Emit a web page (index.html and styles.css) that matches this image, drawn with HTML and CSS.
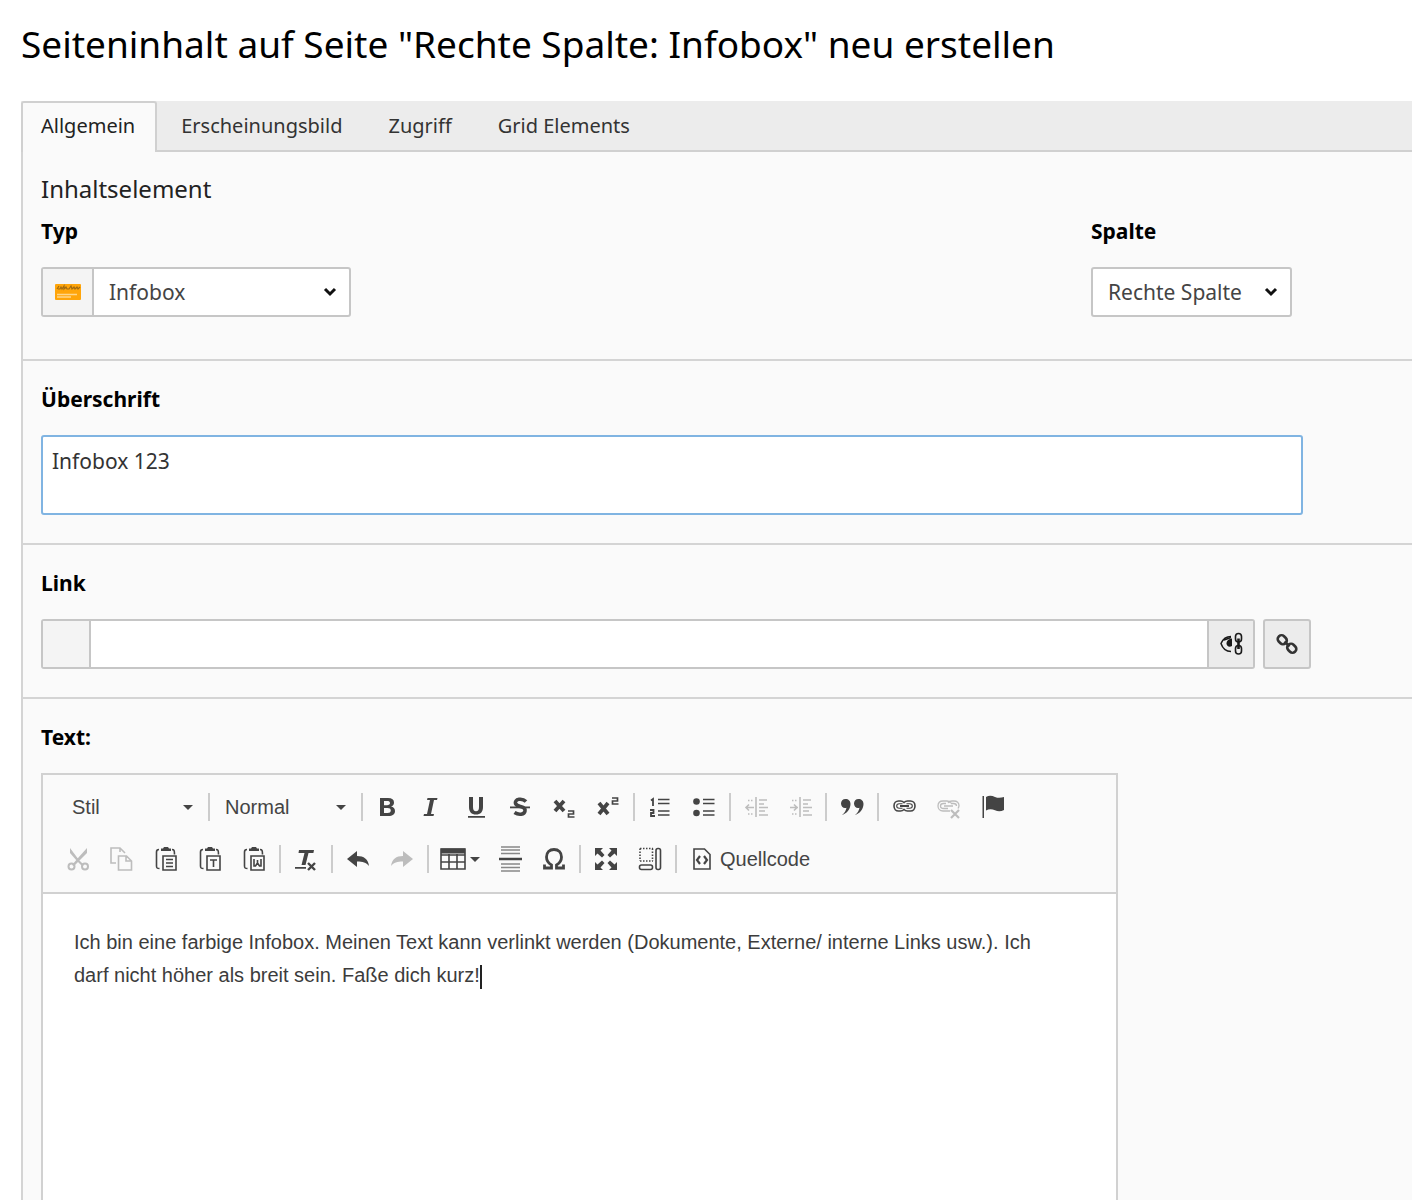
FILE: index.html
```html
<!DOCTYPE html>
<html lang="de">
<head>
<meta charset="utf-8">
<meta name="viewport" content="width=device-width, initial-scale=1">
<title>Seiteninhalt neu erstellen</title>
<link rel="stylesheet" href="styles.css">
</head>
<body>
<main class="page">
  <h1 class="page-title">Seiteninhalt auf Seite "Rechte Spalte: Infobox" neu erstellen</h1>

  <div class="tabs" role="tablist">
    <button class="tab tab-active" type="button" role="tab" aria-selected="true">Allgemein</button>
    <button class="tab" type="button" role="tab">Erscheinungsbild</button>
    <button class="tab" type="button" role="tab">Zugriff</button>
    <button class="tab" type="button" role="tab">Grid Elements</button>
  </div>

  <form class="panel">
    <section class="section section-first">
      <h2 class="palette-title">Inhaltselement</h2>
      <div class="columns">
        <div class="field">
          <label class="label" for="type">Typ</label>
          <div class="group group-type">
            <span class="addon">
              <svg width="26" height="16" viewBox="0 0 26 16"><rect width="26" height="16" rx="1" fill="#ffa50a"/><path d="M2 5l2-3M3 5h2l1-2 1 2 2-3v3l2-2 1 2h2l2-3 1 3 2-2 1 2 2-2 1 2 2-2" fill="none" stroke="#a06a10" stroke-width="1.200"/><path d="M2 10.500h20M2 13h14" stroke="#ffd68a" stroke-width="1.600"/></svg>
            </span>
            <span class="select-wrap">
              <select class="select" id="type"><option>Infobox</option></select>
              <svg class="chevron" width="14" height="10" viewBox="0 0 14 10"><path d="M2 2l5 5 5-5" fill="none" stroke="#111" stroke-width="3"/></svg>
            </span>
          </div>
        </div>
        <div class="field">
          <label class="label" for="column">Spalte</label>
          <div class="group group-column">
            <span class="select-wrap">
              <select class="select" id="column"><option>Rechte Spalte</option></select>
              <svg class="chevron" width="14" height="10" viewBox="0 0 14 10"><path d="M2 2l5 5 5-5" fill="none" stroke="#111" stroke-width="3"/></svg>
            </span>
          </div>
        </div>
      </div>
    </section>

    <section class="section">
      <label class="label" for="header">Überschrift</label>
      <textarea class="header-input" id="header">Infobox 123</textarea>
    </section>

    <section class="section">
      <label class="label" for="link">Link</label>
      <div class="link-row">
        <div class="group group-link">
          <span class="addon addon-link"></span>
          <input class="link-input" id="link" type="text">
          <button class="square-btn" type="button" aria-label="Linkziel anzeigen">
            <svg width="24" height="24" viewBox="0 0 24 24" fill="none" stroke="#1a1a1a"><path d="M12 4.500C7 4.500 3.500 8 2 11.500 3.500 16 7 19.500 12 19.500" stroke-width="1.500"/><path d="M13 6.500C10 7 7.500 8.500 7.500 11.500s3 4 5.500 2.500z" fill="#1a1a1a" stroke="none"/><path d="M5 8l7-2.500" stroke-width="1.500"/><rect x="16.500" y="1.500" width="6" height="8.500" rx="3" stroke-width="1.600"/><rect x="16.500" y="13.500" width="6" height="8.500" rx="3" stroke-width="1.600"/><path d="M19.500 6.500v10.500" stroke-width="2.600"/></svg>
          </button>
        </div>
        <button class="square-btn" type="button" aria-label="Link bearbeiten">
          <svg width="24" height="24" viewBox="0 0 24 24" fill="none" stroke="#333" stroke-width="2.600"><rect x="2.500" y="4" width="9.500" height="7.500" rx="3.500" transform="rotate(45 7.250 7.750)"/><rect x="12" y="12.500" width="9.500" height="7.500" rx="3.500" transform="rotate(45 16.750 16.250)"/><path d="M9.500 9.500l5 5"/></svg>
        </button>
      </div>
    </section>

    <section class="section section-editor">
      <span class="label" id="text-label">Text:</span>
      <div class="editor">
        <div class="toolbar">
          <div class="tool-row tool-row-formats">
            <button class="combo" type="button">Stil<span class="arrow"></span></button>
            <span class="sep"></span>
            <button class="combo" type="button">Normal<span class="arrow"></span></button>
            <span class="sep"></span>
            <button class="tool" type="button" aria-label="Fett"><svg width="24" height="24" viewBox="0 0 24 24"><path fill-rule="evenodd" d="M4 3h8c4 0 6 1.500 6 4.500 0 2-1 3.500-3 4 2.500.5 4 2 4 4.500 0 3.500-2.500 5-6.500 5H4zM8 6v4.200h3c2 0 3-.6 3-2.100S13 6 11 6zM8 13v5h3.500c2.200 0 3.300-.8 3.300-2.500S13.700 13 11.500 13z"/></svg></button>
            <button class="tool" type="button" aria-label="Kursiv"><svg width="24" height="24" viewBox="0 0 24 24"><path d="M7.500 3h10l-.5 2h-3L11 19h3l-.5 2h-10l.5-2h3L10 5H7z"/></svg></button>
            <button class="tool" type="button" aria-label="Unterstrichen"><svg width="24" height="24" viewBox="0 0 24 24"><path d="M5 2h4v10c0 3 1 4.200 3 4.200s3-1.200 3-4.200V2h4v10c0 5-2.500 7.500-7 7.500S5 17 5 12zM4 21h17v1.800H4z"/></svg></button>
            <button class="tool" type="button" aria-label="Durchgestrichen"><svg width="24" height="24" viewBox="0 0 24 24"><path d="M18 6.500c-2-2-4.500-2.500-7-2.200C8 4.700 7 7 7.500 8.500c.8 2 3 2.500 5 3 3.500.8 5 2 4.500 4.500-.5 3.500-6 4.500-10.500 1.500" fill="none" stroke="#444" stroke-width="3.600"/><path d="M2 11.500h20v1.800H2z"/></svg></button>
            <button class="tool" type="button" aria-label="Tiefgestellt"><svg class="line" width="24" height="24" viewBox="0 0 24 24"><path d="M3 6l9 10M12 6L3 16" stroke-width="3.800"/><path d="M16 16h5.500v3h-5v3h6" stroke-width="1.700"/></svg></button>
            <button class="tool" type="button" aria-label="Hochgestellt"><svg class="line" width="24" height="24" viewBox="0 0 24 24"><path d="M3 8l9 11M12 8L3 19" stroke-width="3.800"/><path d="M16 3h5.500v3h-5v3h6" stroke-width="1.700"/></svg></button>
            <span class="sep"></span>
            <button class="tool" type="button" aria-label="Nummerierte Liste"><svg class="line" width="24" height="24" viewBox="0 0 24 24"><path d="M3 5.500l2-1.500v7M2 15h3.500v3H3v3h4" stroke-width="1.800"/><path d="M10 4.500h11.500M10 8.500h11.500M10 16h11.500M10 20h11.500" stroke-width="1.700"/></svg></button>
            <button class="tool" type="button" aria-label="Liste"><svg class="line" width="24" height="24" viewBox="0 0 24 24"><circle cx="4.500" cy="6.500" r="3.300" fill="#444" stroke="none"/><circle cx="4.500" cy="18" r="3.300" fill="#444" stroke="none"/><path d="M11 4.500h11.500M11 8.500h11.500M11 16h11.500M11 20h11.500" stroke-width="1.700"/></svg></button>
            <span class="sep"></span>
            <button class="tool faded" type="button" aria-label="Einzug verkleinern" disabled><svg class="line" width="24" height="24" viewBox="0 0 24 24"><path d="M12 2v20M15 5h8M15 9h5M15 12.500h9M15 16h6M15 20h9M2 12.500h8M5 9.500l-3 3 3 3"/><path d="M4 5.500h6M4 19h6" stroke-dasharray="1.500 1.500"/></svg></button>
            <button class="tool faded" type="button" aria-label="Einzug vergrößern" disabled><svg class="line" width="24" height="24" viewBox="0 0 24 24"><path d="M12 2v20M15 5h8M15 9h5M15 12.500h9M15 16h6M15 20h9M2 12.500h8M6 9.500l3 3-3 3"/><path d="M4 5.500h6M4 19h6" stroke-dasharray="1.500 1.500"/></svg></button>
            <span class="sep"></span>
            <button class="tool" type="button" aria-label="Zitat"><svg width="24" height="24" viewBox="0 0 24 24"><path d="M5.500 4C2.800 4 1 6 1 8.500S2.800 13 5 13c.5 0 1-.1 1.500-.3C6 15.500 4.500 18 2 20c5-1.500 8.500-6 8.500-11C10.500 6 8.500 4 5.500 4zM18.500 4C15.800 4 14 6 14 8.500s1.800 4.500 4 4.500c.5 0 1-.1 1.500-.3-.5 2.800-2 5.300-4.500 7.300 5-1.500 8.500-6 8.500-11 0-3-2-5-5-5z"/></svg></button>
            <span class="sep"></span>
            <button class="tool" type="button" aria-label="Link einfügen"><svg class="line" width="24" height="24" viewBox="0 0 24 24"><path d="M12 7.500c-1-1-2-1.500-3.500-1.500H6.500C4 6 2 8 2 11s2 5 4.500 5h2c1.500 0 2.500-.5 3.500-1.500 1 1 2 1.500 3.500 1.500h3c2.500 0 4.500-2 4.500-5s-2-5-4.500-5h-3C14 6 13 6.500 12 7.500z"/><path d="M10.500 8.800H7.200c-1.500 0-2.500.9-2.500 2.200s1 2.200 2.500 2.200h3.300M14.500 8.800h3.300c1.500 0 2.500.9 2.500 2.200s-1 2.200-2.500 2.200h-3.300" stroke-width="1.100"/><path d="M8 11h9" stroke-width="2"/></svg></button>
            <button class="tool faded" type="button" aria-label="Link entfernen" disabled><svg class="line" width="24" height="24" viewBox="0 0 24 24"><path d="M14 16H7c-3 0-5-2-5-5s2-5 5-5h4c2 0 3 1 4 2M12 8c1-1.500 2-2 4-2h2c3 0 5 2 5 4.500 0 1-.3 2-1 3M12 13.500H7.500c-2 0-3-1-3-2.500s1-2.500 3-2.500H10M15 8.500h2.500c2 0 3 1 3 2.500M8 11h9" stroke-width="1.300"/><path d="M15 15l8 8M23 15l-8 8" stroke-width="2.200"/></svg></button>
            <button class="tool" type="button" aria-label="Anker"><svg width="24" height="24" viewBox="0 0 24 24"><path d="M2.500 1H4v22H2.500zM6 2c3-2 6-1.500 9 0 3 1.200 6 1 9 0v13c-3 1.500-6 1.500-9 .3-3-1.300-6-1.500-9 .2z"/></svg></button>
          </div>
          <div class="tool-row">
            <button class="tool faded" type="button" aria-label="Ausschneiden" disabled><svg width="24" height="24" viewBox="0 0 24 24"><path d="M4 1l9 12 5 5-2 1-5-5L4 6zM21 1v5l-8 8-5 5-2-1 6-7z"/><g fill="none" stroke="#bdbdbd" stroke-width="2"><circle cx="5.500" cy="19.500" r="3"/><circle cx="19" cy="19.500" r="3"/></g></svg></button>
            <button class="tool faded" type="button" aria-label="Kopieren" disabled><svg class="line" width="24" height="24" viewBox="0 0 24 24"><path d="M6 16H1V1h9l5 5M10 1v4M8.500 9h8l5 5v9h-13zM16 9v5h5"/></svg></button>
            <button class="tool" type="button" aria-label="Einfügen"><svg class="line" width="24" height="24" viewBox="0 0 24 24"><path d="M5 2.500C3 2.500 2.500 3 2.500 5v14c0 2 .5 2.500 3 2.500M18 2.500c2 0 2.500.5 2.500 5M9 9h13v14H9zM12 12.500h7M12 16h7M12 19.500h7"/><path d="M7 4V1.500h2L10 0h4l1 1.500h2V4z" fill="#444" stroke="none"/></svg></button>
            <button class="tool" type="button" aria-label="Als Text einfügen"><svg class="line" width="24" height="24" viewBox="0 0 24 24"><path d="M5 2.500C3 2.500 2.500 3 2.500 5v14c0 2 .5 2.500 3 2.500M18 2.500c2 0 2.500.5 2.500 5M9 9h13v14H9zM12 13h7M15.500 13v7"/><path d="M7 4V1.500h2L10 0h4l1 1.500h2V4z" fill="#444" stroke="none"/></svg></button>
            <button class="tool" type="button" aria-label="Aus Word einfügen"><svg class="line" width="24" height="24" viewBox="0 0 24 24"><path d="M5 2.500C3 2.500 2.500 3 2.500 5v14c0 2 .5 2.500 3 2.500M18 2.500c2 0 2.500.5 2.500 5M9 9h13v14H9zM12 12v7h1.500l2-3 2 3H19v-7M15.500 13v3"/><path d="M7 4V1.500h2L10 0h4l1 1.500h2V4z" fill="#444" stroke="none"/></svg></button>
            <span class="sep"></span>
            <button class="tool" type="button" aria-label="Formatierung entfernen"><svg width="24" height="24" viewBox="0 0 24 24"><path d="M5 3h15l-.6 3H14.500L11.500 18h-4L10.500 6H4.500zM1 20h11v1.700H1z"/><path d="M14 16l7 7M21 16l-7 7" stroke="#444" stroke-width="2.400"/></svg></button>
            <span class="sep"></span>
            <button class="tool" type="button" aria-label="Rückgängig"><svg width="24" height="24" viewBox="0 0 24 24"><path d="M1 12l10-8v5c7 0 11 3 12 10-3-3.500-6-4.500-12-4.500V20z"/></svg></button>
            <button class="tool faded" type="button" aria-label="Wiederholen" disabled><svg width="24" height="24" viewBox="0 0 24 24"><path d="M23 12L13 4v5C6 9 2 12 1 19c3-3.500 6-4.500 12-4.500V20z"/></svg></button>
            <span class="sep"></span>
            <button class="tool tool-menu" type="button" aria-label="Tabelle"><svg class="line" width="26" height="24" viewBox="0 0 26 24"><path d="M1 2h24v20H1zM1 8h24M1 15h24M9 7v15M17 7v15"/><path d="M1 1.500h24v5H1z" fill="#444" stroke="none"/></svg><span class="arrow"></span></button>
            <button class="tool" type="button" aria-label="Horizontale Linie"><svg width="24" height="26" viewBox="0 0 24 26" stroke="#888" stroke-width="1.300"><path d="M3 1h19M3 4h19M3 7.500h19M3 18h19M3 21.500h19M3 25h19"/><path d="M1 13h23" stroke="#444" stroke-width="2.500"/></svg></button>
            <button class="tool" type="button" aria-label="Sonderzeichen"><svg class="line" width="24" height="24" viewBox="0 0 24 24"><path d="M2.500 17.500V21h7v-3C6 16 4.500 13.500 4.500 10c0-4.500 3-7.500 7.500-7.500s7.500 3 7.500 7.500c0 3.500-1.500 6-5 8v3h7v-3.500" stroke-width="2.800"/></svg></button>
            <span class="sep"></span>
            <button class="tool" type="button" aria-label="Maximieren"><svg width="24" height="24" viewBox="0 0 24 24"><path d="M1 1h8L6.500 3.500l4 4.500L8 10.500l-4.500-4L1 9zM23 1v8l-2.500-2.500-4.500 4L13.500 8l4-4.500L15 1zM1 23v-8l2.500 2.500 4.500-4 2.500 2.500-4 4.500L9 23zM23 23h-8l2.500-2.500-4-4.500 2.500-2.500 4.500 4L23 15z"/></svg></button>
            <button class="tool" type="button" aria-label="Blöcke anzeigen"><svg class="line" width="24" height="24" viewBox="0 0 24 24"><path d="M2 1.500h13M2 14h13M2 1.500V14M14.500 1.500V14" stroke-dasharray="1.500 1.500"/><rect x="1.500" y="18" width="13" height="4.500" rx="2"/><rect x="18" y="1.500" width="4.500" height="21" rx="2"/></svg></button>
            <span class="sep"></span>
            <button class="source" type="button"><svg class="line" width="18" height="24" viewBox="0 0 18 24"><path d="M1 2h10.500L17 7.500V22H1z"/><path d="M7 9l-3 4 3 4M11 9l3 4-3 4" stroke-width="2.200"/></svg>Quellcode</button>
          </div>
        </div>
        <div class="content" contenteditable="true" role="textbox" aria-labelledby="text-label" spellcheck="false">Ich bin eine farbige Infobox. Meinen Text kann verlinkt werden (Dokumente, Externe/ interne Links usw.). Ich darf nicht höher als breit sein. Faße dich kurz!<span class="caret"></span></div>
      </div>
    </section>
  </form>
</main>
</body>
</html>
```
FILE: styles.css
```css
* {
  box-sizing: border-box;
}

body {
  margin: 0;
  background: #fff;
  color: #111;
  font: 21px/28px "Noto Sans", sans-serif;
}

button,
input,
select,
textarea {
  margin: 0;
  color: inherit;
  font: inherit;
}

button {
  padding: 0;
  border: 0;
  background: none;
}

svg {
  display: block;
  flex: none;
}

.page {
  display: flex;
  flex-direction: column;
  min-height: 100vh;
  padding-left: 21px;
}

.page-title {
  margin: 0;
  padding: 20px 0 33px;
  color: #000;
  font-size: 37px;
  font-weight: 400;
  line-height: 48px;
}

/* Tabs */
.tabs {
  display: flex;
  gap: 4px;
  height: 51px;
  border-bottom: 2px solid #d0d0d0;
  background: #ececec;
}

.tab {
  height: 51px;
  padding: 0 20px 4px 18px;
  border: 2px solid transparent;
  border-bottom: 0;
  color: #333;
  font-size: 20px;
}

.tab-active {
  border-color: #d0d0d0;
  border-radius: 3px 3px 0 0;
  background: #fafafa;
  color: #222;
}

/* Form sections */
.panel {
  display: flex;
  flex: 1;
  flex-direction: column;
  border-left: 2px solid #d4d4d4;
  background: #fafafa;
}

.section {
  padding: 24px 18px 28px;
  border-bottom: 2px solid #d4d4d4;
}

.section-first {
  padding: 22px 18px 42px;
}

.section-editor {
  display: flex;
  flex: 1;
  flex-direction: column;
  padding-bottom: 0;
  border-bottom: 0;
}

.palette-title {
  margin: 0 0 13px;
  color: #222;
  font-size: 24px;
  font-weight: 400;
  line-height: 30px;
}

.columns {
  display: grid;
  grid-template-columns: 1050px 1fr;
}

.label {
  display: block;
  margin-bottom: 22px;
  color: #000;
  font-weight: 700;
}

.group {
  display: flex;
  height: 50px;
  border: 2px solid #c6c6c6;
  border-radius: 3px;
  background: #fff;
  color: #444;
}

.group-type {
  width: 310px;
}

.group-column {
  width: 201px;
}

.addon {
  display: flex;
  flex: none;
  align-items: center;
  justify-content: center;
  width: 51px;
  border-right: 2px solid #c6c6c6;
  background: #f4f4f4;
}

.addon-link {
  width: 48px;
}

.select-wrap {
  position: relative;
  flex: 1;
}

.select {
  width: 100%;
  height: 100%;
  padding: 0 15px;
  border: 0;
  appearance: none;
  background: none;
}

.group-column .select {
  padding-right: 0;
}

.chevron {
  position: absolute;
  top: 18px;
  right: 12px;
  pointer-events: none;
}

.header-input {
  display: block;
  width: 100%;
  max-width: 1262px;
  height: 80px;
  padding: 10px 9px;
  border: 2px solid #80b4e2;
  border-radius: 3px;
  outline: 0;
  background: #fff;
  color: #333;
  resize: none;
}

.link-row {
  display: flex;
  gap: 8px;
  max-width: 1270px;
}

.group-link {
  flex: 1;
}

.link-input {
  flex: 1;
  min-width: 0;
  padding: 0 10px;
  border: 0;
  background: #fff;
}

.square-btn {
  display: flex;
  flex: none;
  align-items: center;
  justify-content: center;
  width: 48px;
  border: 2px solid #c6c6c6;
  border-radius: 3px;
  background: #ececec;
}

.group-link .square-btn {
  width: 46px;
  border-width: 0 0 0 2px;
  border-radius: 0;
}

/* Rich text editor */
.editor {
  display: flex;
  flex: 1;
  flex-direction: column;
  max-width: 1077px;
  border: 2px solid #d1d1d1;
  border-bottom: 0;
  background: #fff;
  color: #444;
  font-family: "Liberation Sans", Arial, sans-serif;
  font-size: 20px;
}

.toolbar {
  padding: 6px 13px 7px;
  border-bottom: 2px solid #d1d1d1;
  background: #fafafa;
}

.tool-row {
  display: flex;
  align-items: center;
  height: 52px;
}

.tool-row-formats {
  padding-left: 4px;
}

.tool {
  display: flex;
  flex: none;
  align-items: center;
  justify-content: center;
  width: 44px;
  height: 44px;
}

.tool svg {
  fill: #444;
}

.tool .line,
.source .line {
  fill: none;
  stroke: #444;
  stroke-width: 1.6;
}

.tool.faded svg {
  fill: #bdbdbd;
}

.tool.faded .line {
  fill: none;
  stroke: #bdbdbd;
}

.tool-menu {
  gap: 4px;
  width: 56px;
}

.combo {
  display: flex;
  align-items: center;
  justify-content: space-between;
  width: 145px;
  padding: 0 12px;
}

.arrow {
  border: 5px solid transparent;
  border-top-color: #444;
  border-bottom: 0;
}

.sep {
  flex: none;
  width: 2px;
  height: 28px;
  margin: 0 3px;
  background: #ccc;
}

.source {
  display: flex;
  align-items: center;
  gap: 9px;
  padding-left: 13px;
}

.content {
  flex: 1;
  padding: 32px 48px 32px 31px;
  outline: 0;
  color: #3c3c3c;
  line-height: 33px;
}

.caret {
  display: inline-block;
  width: 2px;
  height: 24px;
  background: #222;
  vertical-align: middle;
}
```
